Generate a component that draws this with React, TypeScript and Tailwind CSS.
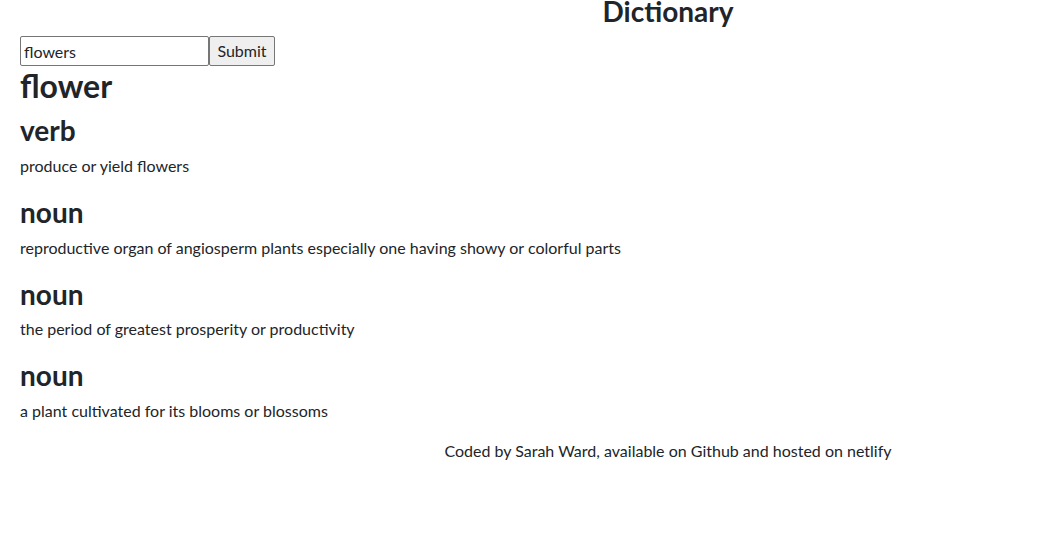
const entries = [
  { pos: 'verb', def: 'produce or yield flowers' },
  { pos: 'noun', def: 'reproductive organ of angiosperm plants especially one having showy or colorful parts' },
  { pos: 'noun', def: 'the period of greatest prosperity or productivity' },
  { pos: 'noun', def: 'a plant cultivated for its blooms or blossoms' },
];

export default function App() {
  return (
    <div className="h-[543px] w-full overflow-hidden bg-white text-[#212529] font-['Lato','Liberation_Sans',sans-serif] text-base leading-6">
      <div className="ml-[20px] w-[1296px]">
        <h3 className="mb-[14px] text-center text-[28px] leading-[22px] font-bold">Dictionary</h3>
        <form className="flex" onSubmit={e => e.preventDefault()}>
          <input
            type="text"
            defaultValue="flowers"
            className="w-[189px] h-[30px] px-[3px] py-[2px] border border-[#767676] rounded-[2px] bg-white"
          />
          <button
            type="submit"
            className="w-[66px] h-[30px] border border-[#767676] rounded-[2px] bg-[#efefef] text-center"
          >
            Submit
          </button>
        </form>
        <h2 className="pt-[1px] mb-[7px] text-[32px] leading-[1.2] font-bold">flower</h2>
        {entries.map((en, i) => (
          <div key={i}>
            <h3 className="pt-[2px] mb-[6px] text-[28px] leading-[1.2] font-bold">{en.pos}</h3>
            <p className="mb-4">{en.def}</p>
          </div>
        ))}
        <footer className="text-center">
          Coded by Sarah Ward, available on Github and hosted on netlify
        </footer>
      </div>
    </div>
  );
}
